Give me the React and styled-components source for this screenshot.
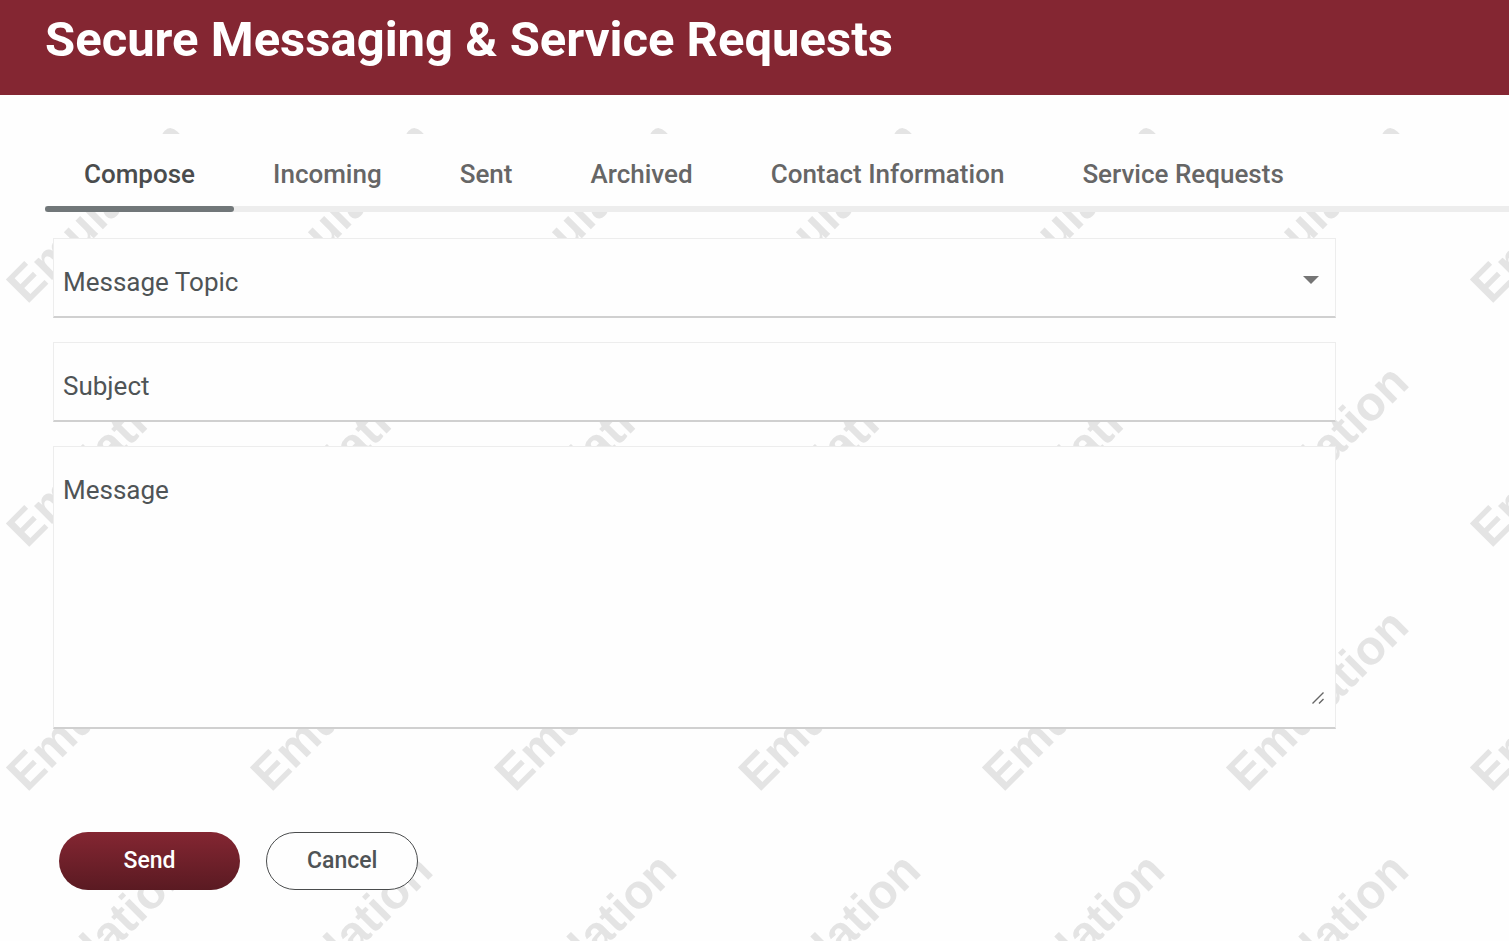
import React, { useState } from "react";
import styled, { createGlobalStyle } from "styled-components";

const TABS = [
  "Compose",
  "Incoming",
  "Sent",
  "Archived",
  "Contact Information",
  "Service Requests",
];

const TOPICS = ["Account Question", "Cards", "Loans", "Online Banking"];

function App() {
  const [activeTab, setActiveTab] = useState("Compose");
  const [topic, setTopic] = useState("");
  const [subject, setSubject] = useState("");
  const [message, setMessage] = useState("");

  const clearForm = () => {
    setTopic("");
    setSubject("");
    setMessage("");
  };

  return (
    <Page>
      <GlobalStyle />
      <Watermark aria-hidden="true">
        <defs>
          <pattern id="watermark" y="64" width="244" height="244" patternUnits="userSpaceOnUse">
            <text transform="translate(27 241) rotate(-45)">Emulation</text>
          </pattern>
        </defs>
        <rect width="100%" height="100%" fill="url(#watermark)" />
      </Watermark>

      <Header>
        <Title>Secure Messaging &amp; Service Requests</Title>
      </Header>

      <TabBar role="tablist">
        {TABS.map((tab) => (
          <Tab
            key={tab}
            type="button"
            role="tab"
            aria-selected={tab === activeTab}
            $active={tab === activeTab}
            onClick={() => setActiveTab(tab)}
          >
            {tab}
          </Tab>
        ))}
      </TabBar>

      <Form
        onSubmit={(e) => {
          e.preventDefault();
          clearForm();
        }}
      >
        <Field>
          <Label htmlFor="topic" $hidden={topic !== ""}>Message Topic</Label>
          <Select id="topic" value={topic} onChange={(e) => setTopic(e.target.value)}>
            <option value=""></option>
            {TOPICS.map((t) => (
              <option key={t} value={t}>{t}</option>
            ))}
          </Select>
          <Arrow viewBox="0 0 16 8" aria-hidden="true">
            <path d="M0 0h16L8 8z" fill="#757575" />
          </Arrow>
        </Field>

        <Field>
          <Label htmlFor="subject" $hidden={subject !== ""}>Subject</Label>
          <Input id="subject" value={subject} onChange={(e) => setSubject(e.target.value)} />
        </Field>

        <Field>
          <Label htmlFor="message" $hidden={message !== ""}>Message</Label>
          <TextArea id="message" value={message} onChange={(e) => setMessage(e.target.value)} />
          <Grip viewBox="0 0 14 14" aria-hidden="true">
            <path d="M1.500 12.500L12.500 1.500M8 12.500L12.500 8" stroke="#666" strokeWidth="1.400" fill="none" />
          </Grip>
        </Field>

        <Actions>
          <SendButton type="submit">Send</SendButton>
          <CancelButton type="button" onClick={clearForm}>Cancel</CancelButton>
        </Actions>
      </Form>
    </Page>
  );
}

export default App;

const GlobalStyle = createGlobalStyle`
  * {
    box-sizing: border-box;
  }

  body {
    margin: 0;
    background: #fefefe;
    font-family: Roboto, "Liberation Sans", sans-serif;
  }

  button, input, select, textarea {
    font-family: inherit;
  }
`;

const Page = styled.div`
  position: relative;
  min-height: 100vh;
  overflow: hidden;
  isolation: isolate;
`;

const Watermark = styled.svg`
  position: absolute;
  inset: 0;
  width: 100%;
  height: 100%;
  z-index: -1;

  text {
    font-family: "Liberation Sans", Arial, sans-serif;
    font-size: 48px;
    font-weight: 700;
    fill: #e4e4e4;
  }
`;

const Header = styled.header`
  background: #842632;
  padding: 10px 45px 25px;
`;

const Title = styled.h1`
  margin: 0;
  font-size: 49px;
  line-height: 60px;
  font-weight: 700;
  color: #fff;
`;

const TabBar = styled.div`
  display: flex;
  margin: 39px 0 0 45px;
  background: #fefefe;
  box-shadow: inset 0 -6px #ededed;
`;

const Tab = styled.button`
  position: relative;
  border: 0;
  padding: 20px 39px 18px;
  background: none;
  font-size: 26px;
  line-height: 40px;
  font-weight: 500;
  color: ${(props) => (props.$active ? "#4a4c4d" : "#666")};
  cursor: pointer;

  &::after {
    content: "";
    position: absolute;
    left: 0;
    right: 0;
    bottom: 0;
    height: 6px;
    border-radius: 3px;
    background: ${(props) => (props.$active ? "#717779" : "transparent")};
  }
`;

const Form = styled.form`
  width: 85%;
  margin: 26px 0 0 53px;
  display: flex;
  flex-direction: column;
  gap: 24px;
`;

const Field = styled.div`
  display: grid;
  background: #fefefe;
  border: 1px solid #ededed;
  border-bottom: 2px solid #d0d0d0;

  > * {
    grid-area: 1 / 1;
  }
`;

const Label = styled.label`
  align-self: start;
  justify-self: start;
  padding: 27px 9px 0;
  font-size: 26px;
  line-height: 32px;
  color: #4f5456;
  pointer-events: none;
  z-index: 1;
  visibility: ${(props) => (props.$hidden ? "hidden" : "visible")};
`;

const Input = styled.input`
  width: 100%;
  height: 77px;
  border: 0;
  padding: 12px 9px 0;
  background: transparent;
  font-size: 26px;
  color: #4f5456;
  outline: none;
`;

const Select = styled.select`
  width: 100%;
  height: 77px;
  border: 0;
  padding: 12px 9px 0;
  background: transparent;
  appearance: none;
  font-size: 26px;
  color: #4f5456;
  outline: none;
`;

const TextArea = styled.textarea`
  width: 100%;
  height: 280px;
  border: 0;
  padding: 27px 9px 0;
  background: transparent;
  font-size: 26px;
  line-height: 32px;
  color: #4f5456;
  outline: none;
  resize: vertical;

  &::-webkit-resizer {
    background: transparent;
  }
`;

const Arrow = styled.svg`
  width: 16px;
  height: 8px;
  align-self: center;
  justify-self: end;
  margin: 4px 16px 0 0;
  pointer-events: none;
`;

const Grip = styled.svg`
  width: 14px;
  height: 14px;
  align-self: end;
  justify-self: end;
  margin: 0 10px 22px 0;
  pointer-events: none;
`;

const Actions = styled.div`
  display: flex;
  gap: 26px;
  margin: 79px 0 50px 6px;
`;

const Button = styled.button`
  height: 58px;
  border-radius: 29px;
  padding: 0 40px 2px;
  font-size: 23px;
  font-weight: 500;
  cursor: pointer;
`;

const SendButton = styled(Button)`
  min-width: 181px;
  border: 0;
  background: linear-gradient(#842632, #5a1a22);
  color: #fff;
`;

const CancelButton = styled(Button)`
  border: 1px solid #4a4c4d;
  background: #fefefe;
  color: #4f5456;
`;
